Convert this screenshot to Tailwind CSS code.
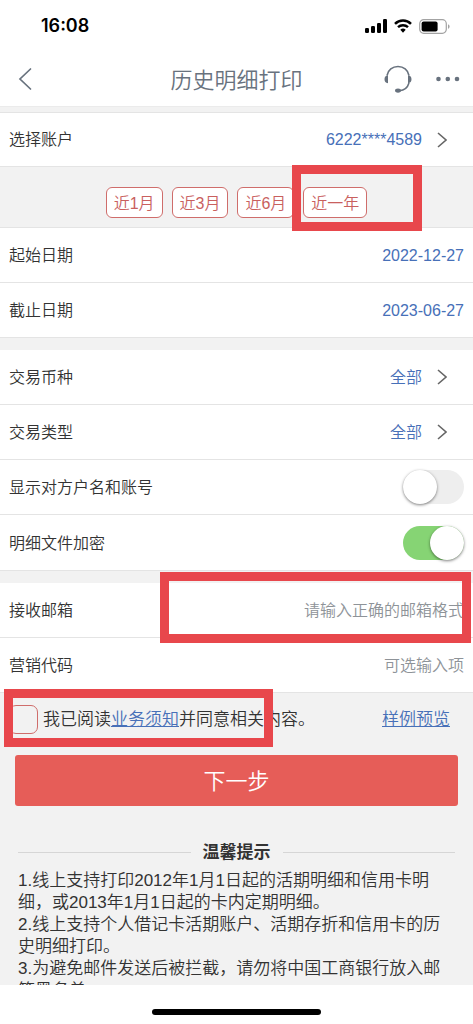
<!DOCTYPE html>
<html lang="zh-CN">
<head>
<meta charset="utf-8">
<meta name="viewport" content="width=device-width, initial-scale=1">
<title>历史明细打印</title>
<script src="https://cdn.jsdelivr.net/npm/@tailwindcss/browser@4"></script>
</head>
<body class="flex h-screen flex-col overflow-hidden bg-white font-['Liberation_Sans','Noto_Sans_CJK_SC',sans-serif] text-[16px] leading-6 font-[350] text-[#333]">

<!-- Status bar -->
<div class="flex h-[52px] shrink-0 items-center justify-between pr-[23px] pl-[41px]">
  <span class="font-['Inter',sans-serif] text-[18px] font-semibold text-black">16:08</span>
  <div class="flex items-center gap-[7px]">
    <svg class="h-[14px] w-[22px]" viewBox="0 0 22 14" aria-hidden="true">
      <rect x="0" y="9" width="4" height="5" rx="1.2"/><rect x="6" y="7" width="4" height="7" rx="1.2"/><rect x="12" y="4" width="4" height="10" rx="1.2"/><rect x="18" y="0" width="4" height="14" rx="1.2"/>
    </svg>
    <svg class="h-[14px] w-[18px]" viewBox="0 0 18 14" aria-hidden="true">
      <path d="M1 4.9A11.4 11.4 0 0 1 17 4.9" fill="none" stroke="#000" stroke-width="2.5"/>
      <path d="M4 8.2a7.2 7.2 0 0 1 10 0" fill="none" stroke="#000" stroke-width="2.4"/>
      <path d="M6.3 10.8a3.9 3.9 0 0 1 5.4 0L9 13.7Z"/>
    </svg>
    <svg class="h-[15px] w-[31px]" viewBox="0 0 31 15" aria-hidden="true">
      <rect x=".7" y=".7" width="26.6" height="13.6" rx="4" fill="none" stroke="#a3a3a3" stroke-width="1.2"/>
      <rect x="2.6" y="2.6" width="16" height="9.8" rx="2"/>
      <path d="M29 5.2v4.6c1-.4 1.6-1.3 1.6-2.3S30 5.600 29 5.200Z" fill="#a3a3a3"/>
    </svg>
  </div>
</div>

<!-- Navigation bar -->
<header class="grid h-[54px] shrink-0 grid-cols-[1fr_auto_1fr] items-center px-[13px] text-[#68727e]">
  <button type="button" aria-label="返回" class="w-8 pl-[5px]">
    <svg class="h-6 w-4" viewBox="0 0 16 24" fill="none" stroke="currentColor" stroke-width="1.7" stroke-linecap="round"><path d="M12.500 2 2 12l10.500 10"/></svg>
  </button>
  <h1 class="pt-[3px] text-[22px]">历史明细打印</h1>
  <div class="flex items-center justify-end gap-6">
    <button type="button" aria-label="在线客服">
      <svg class="h-7 w-7" viewBox="0 0 28 28" fill="none" stroke="currentColor" stroke-width="1.6">
        <path d="M3 10.500C4 5 8.500 1.500 14 1.500S24 5 25 10.500"/>
        <path d="M25 18c-1.500 4.800-5.500 7.500-9.500 7.800"/>
        <path d="M4 10.300v8C1.500 18 .5 16.500.5 14.300s1-3.700 3.500-4ZM24 10.300v8c2.500-.3 3.500-1.800 3.500-4s-1-3.700-3.500-4Z" fill="currentColor" stroke="none"/>
        <ellipse cx="14" cy="25.600" rx="3" ry="2.100" fill="currentColor" stroke="none"/>
      </svg>
    </button>
    <button type="button" aria-label="更多">
      <svg class="h-6 w-6" viewBox="0 0 24 24" fill="currentColor"><circle cx="2.500" cy="12" r="2.300"/><circle cx="11.800" cy="12" r="2.300"/><circle cx="21" cy="12" r="2.300"/></svg>
    </button>
  </div>
</header>

<main class="min-h-0 flex-1 overflow-hidden bg-[#f2f2f2]">
  <form>
    <section class="border-t border-[#ebebeb] pt-[5px]">
      <button type="button" class="flex h-[55px] w-full items-center border-y border-[#e4e4e4] bg-white pr-[26px] pl-[9px]">
        <span>选择账户</span>
        <span class="ml-auto text-[#4770b8]">6222****4589</span>
        <svg class="ml-[15px] h-4 w-[10px] text-[#666]" viewBox="0 0 10 16" fill="none" stroke="currentColor" stroke-width="1.600"><path d="m1 1 8 7-8 7"/></svg>
      </button>
    </section>

    <!-- Quick range choices -->
    <div class="flex h-[61px] items-center justify-center gap-[9px] border-b border-[#e4e4e4] pt-[11px] text-[#c9605e]">
      <button type="button" class="h-[31px] rounded-[6px] border border-[#cf6d6b] bg-white px-[7px] pt-[2px]">近1月</button>
      <button type="button" class="h-[31px] rounded-[6px] border border-[#cf6d6b] bg-white px-[7px] pt-[2px]">近3月</button>
      <button type="button" class="h-[31px] rounded-[6px] border border-[#cf6d6b] bg-white px-[7px] pt-[2px]">近6月</button>
      <div class="relative">
        <button type="button" class="block h-[31px] rounded-[6px] border border-[#cf6d6b] bg-white px-[7px] pt-[2px]">近一年</button>
        <span class="pointer-events-none absolute -top-[22px] -left-[11px] h-[66px] w-[130px] border-[9px] border-[#e8474c]"></span>
      </div>
    </div>

    <section class="bg-white">
      <button type="button" class="flex h-[55px] w-full items-center justify-between border-b border-[#e4e4e4] px-[9px] pt-[2px]">
        <span>起始日期</span><span class="text-[#4770b8]">2022-12-27</span>
      </button>
      <button type="button" class="flex h-[55px] w-full items-center justify-between border-b border-[#e4e4e4] px-[9px] pt-[2px]">
        <span>截止日期</span><span class="text-[#4770b8]">2023-06-27</span>
      </button>
    </section>

    <section class="mt-3 bg-white">
      <button type="button" class="flex h-[55px] w-full items-center border-b border-[#e4e4e4] pr-[26px] pl-[9px]">
        <span class="pt-[2px]">交易币种</span>
        <span class="ml-auto pt-[2px] text-[#4770b8]">全部</span>
        <svg class="ml-[15px] h-4 w-[10px] text-[#666]" viewBox="0 0 10 16" fill="none" stroke="currentColor" stroke-width="1.600"><path d="m1 1 8 7-8 7"/></svg>
      </button>
      <button type="button" class="flex h-[55px] w-full items-center border-b border-[#e4e4e4] pr-[26px] pl-[9px]">
        <span class="pt-[2px]">交易类型</span>
        <span class="ml-auto pt-[2px] text-[#4770b8]">全部</span>
        <svg class="ml-[15px] h-4 w-[10px] text-[#666]" viewBox="0 0 10 16" fill="none" stroke="currentColor" stroke-width="1.600"><path d="m1 1 8 7-8 7"/></svg>
      </button>
      <div class="flex h-[55px] items-center justify-between border-b border-[#e4e4e4] px-[9px]">
        <label for="show-name" class="pt-[2px]">显示对方户名和账号</label>
        <input id="show-name" type="checkbox" role="switch" class="h-[34px] w-[61px] appearance-none rounded-full bg-[#eeeeee] before:block before:size-[34px] before:rounded-full before:bg-white before:shadow-[0_1px_3px_rgba(0,0,0,0.5)] before:content-[''] checked:bg-[#86d474] checked:before:ml-[27px]">
      </div>
      <div class="flex h-[56px] items-center justify-between border-b border-[#e4e4e4] px-[9px]">
        <label for="encrypt" class="pt-[2px]">明细文件加密</label>
        <input id="encrypt" type="checkbox" role="switch" checked class="h-[34px] w-[61px] appearance-none rounded-full bg-[#eeeeee] before:block before:size-[34px] before:rounded-full before:bg-white before:shadow-[0_1px_3px_rgba(0,0,0,0.5)] before:content-[''] checked:bg-[#86d474] checked:before:ml-[27px]">
      </div>
    </section>

    <section class="mt-3 bg-white">
      <div class="relative flex h-[55px] items-center border-b border-[#e4e4e4] px-[9px] pt-[2px]">
        <label for="email" class="shrink-0">接收邮箱</label>
        <input id="email" type="email" placeholder="请输入正确的邮箱格式" class="min-w-0 flex-1 bg-transparent text-right outline-none placeholder:text-[#8e9398]">
        <span class="pointer-events-none absolute -top-[11px] right-[2px] h-[71px] w-[311px] border-[9px] border-[#e8474c]"></span>
      </div>
      <div class="flex h-[55px] items-center border-b border-[#e4e4e4] px-[9px] pt-[2px]">
        <label for="promo" class="shrink-0">营销代码</label>
        <input id="promo" type="text" placeholder="可选输入项" class="min-w-0 flex-1 bg-transparent text-right outline-none placeholder:text-[#8e9398]">
      </div>
    </section>

    <div class="relative flex h-[52px] items-center pr-[23px] pl-[9px] text-[17px]">
      <input id="agree" type="checkbox" class="mr-[5px] h-[29px] w-[29px] shrink-0 appearance-none rounded-[7px] border border-[#cf6d6b] bg-transparent checked:bg-[#e65d58]">
      <label for="agree" class="pt-[2px] whitespace-nowrap">我已阅读<a href="#notice" class="text-[#4770b8] underline">业务须知</a>并同意相关内容。</label>
      <a href="#sample" class="ml-auto pt-[2px] whitespace-nowrap text-[#4770b8] underline">样例预览</a>
      <span class="pointer-events-none absolute -top-[4px] left-1 h-[58px] w-[269px] border-[9px] border-[#e8474c]"></span>
    </div>

    <div class="px-[15px] pt-[10px]">
      <button type="submit" class="h-[51px] w-full rounded-[3px] bg-[#e65d58] pt-[2px] text-[22px] text-white">下一步</button>
    </div>
  </form>

  <section class="pt-[34px] pr-[26px] pl-[18px] text-[17px] leading-[22px]">
    <div class="-mr-2 flex items-center gap-3">
      <span class="h-px flex-1 bg-[#d6d6d6]"></span>
      <h2 class="pt-[2px] font-bold text-[#333]">温馨提示</h2>
      <span class="h-px flex-1 bg-[#d6d6d6]"></span>
    </div>
    <ol class="mt-[6px]">
      <li>1.线上支持打印2012年1月1日起的活期明细和信用卡明细，或2013年1月1日起的卡内定期明细。</li>
      <li>2.线上支持个人借记卡活期账户、活期存折和信用卡的历史明细打印。</li>
      <li>3.为避免邮件发送后被拦截，请勿将中国工商银行放入邮箱黑名单。</li>
    </ol>
  </section>
</main>

<!-- Home indicator -->
<footer class="flex h-[39px] shrink-0 items-end justify-center pb-[9px]">
  <span class="h-[6px] w-[169px] rounded-full bg-black"></span>
</footer>
</body>
</html>
